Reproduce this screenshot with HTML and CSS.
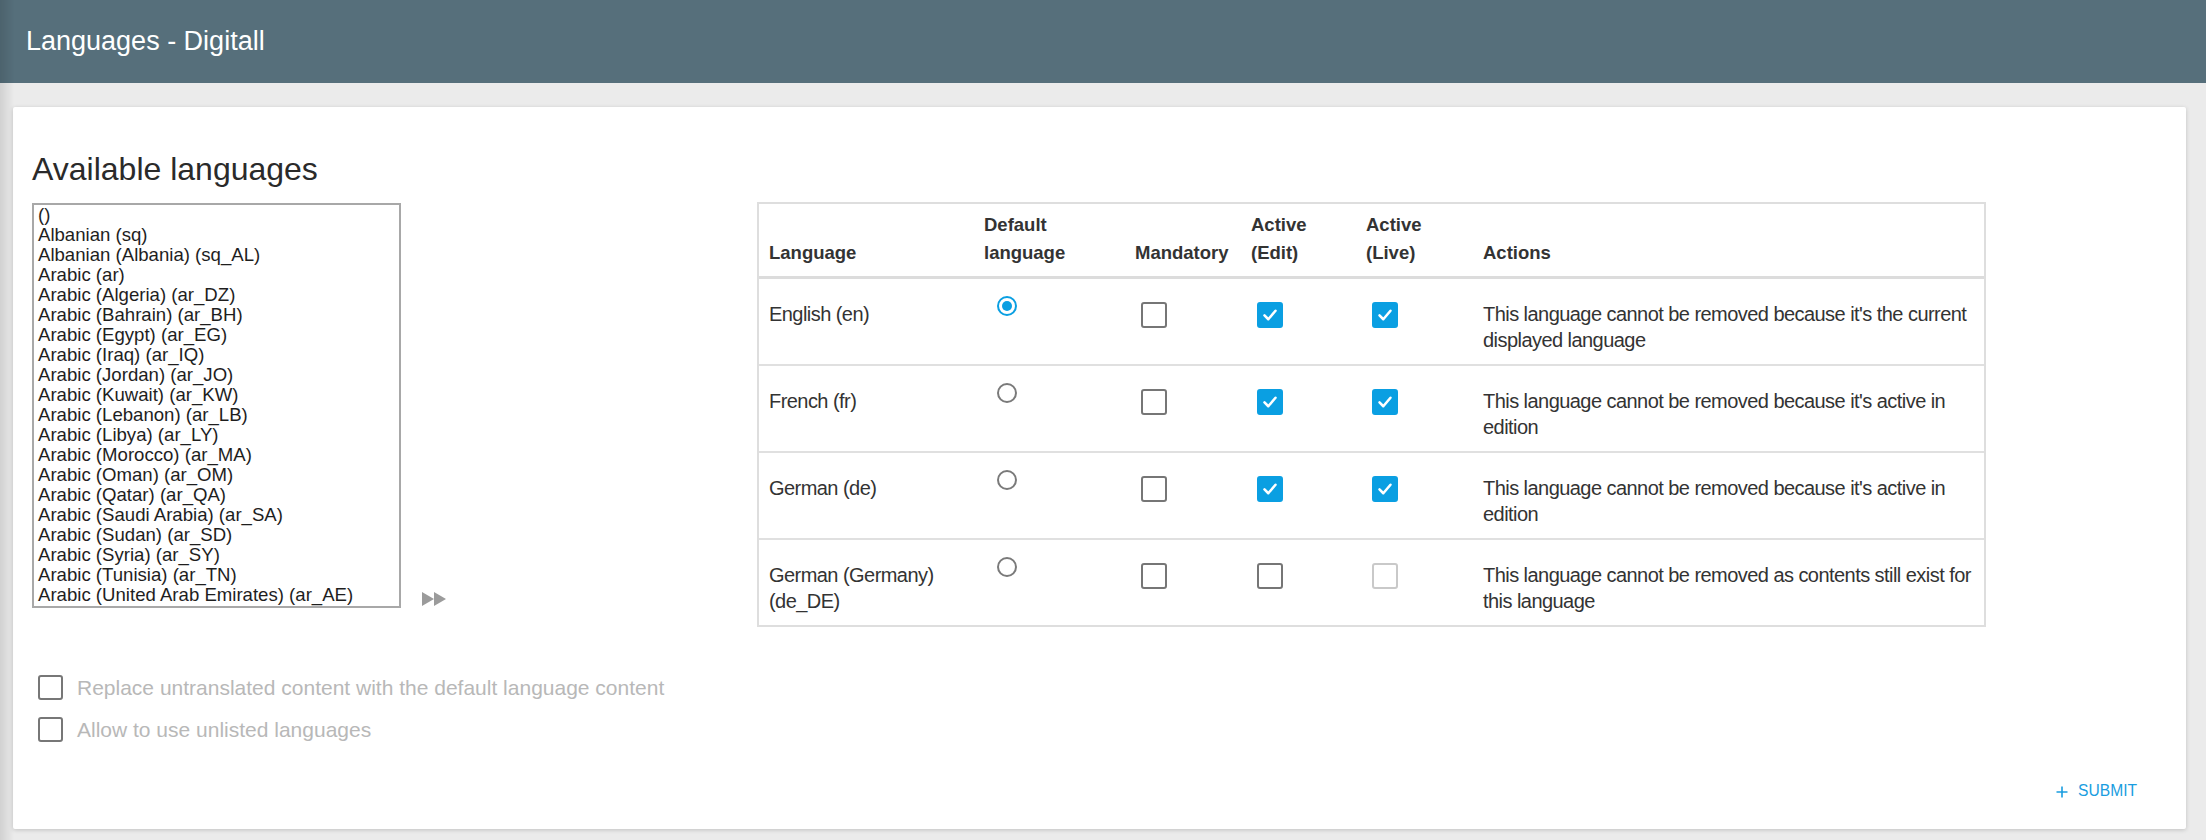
FILE: index.html
```html
<!DOCTYPE html>
<html lang="en">
<head>
<meta charset="utf-8">
<title>Languages - Digitall</title>
<link rel="stylesheet" href="styles.css">
</head>
<body>
<header class="topbar">Languages - Digitall</header>
<main class="card">
  <h1 class="title">Available languages</h1>
  <div class="lang-row">
    <div class="picker">
      <ul class="listbox">
        <li>()</li>
        <li>Albanian (sq)</li>
        <li>Albanian (Albania) (sq_AL)</li>
        <li>Arabic (ar)</li>
        <li>Arabic (Algeria) (ar_DZ)</li>
        <li>Arabic (Bahrain) (ar_BH)</li>
        <li>Arabic (Egypt) (ar_EG)</li>
        <li>Arabic (Iraq) (ar_IQ)</li>
        <li>Arabic (Jordan) (ar_JO)</li>
        <li>Arabic (Kuwait) (ar_KW)</li>
        <li>Arabic (Lebanon) (ar_LB)</li>
        <li>Arabic (Libya) (ar_LY)</li>
        <li>Arabic (Morocco) (ar_MA)</li>
        <li>Arabic (Oman) (ar_OM)</li>
        <li>Arabic (Qatar) (ar_QA)</li>
        <li>Arabic (Saudi Arabia) (ar_SA)</li>
        <li>Arabic (Sudan) (ar_SD)</li>
        <li>Arabic (Syria) (ar_SY)</li>
        <li>Arabic (Tunisia) (ar_TN)</li>
        <li>Arabic (United Arab Emirates) (ar_AE)</li>
        <li>Arabic (Yemen) (ar_YE)</li>
      </ul>
      <svg class="ff" width="24" height="14" viewBox="0 0 24 14"><polygon points="0,0 12,7 0,14"/><polygon points="12,0 24,7 12,14"/></svg>
    </div>
    <table class="langs">
      <colgroup>
        <col class="c-lang"><col class="c-def"><col class="c-man"><col class="c-edit"><col class="c-live"><col class="c-act">
      </colgroup>
      <thead>
        <tr>
          <th>Language</th>
          <th>Default<br>language</th>
          <th>Mandatory</th>
          <th>Active<br>(Edit)</th>
          <th>Active<br>(Live)</th>
          <th>Actions</th>
        </tr>
      </thead>
      <tbody>
        <tr>
          <td>English (en)</td>
          <td><span class="radio on"></span></td>
          <td><span class="cb"></span></td>
          <td><span class="cb on"><svg viewBox="0 0 26 26"><polyline points="6.5,13.5 11,18 19.5,8"/></svg></span></td>
          <td><span class="cb on"><svg viewBox="0 0 26 26"><polyline points="6.5,13.5 11,18 19.5,8"/></svg></span></td>
          <td>This language cannot be removed because it's the current<br>displayed language</td>
        </tr>
        <tr>
          <td>French (fr)</td>
          <td><span class="radio"></span></td>
          <td><span class="cb"></span></td>
          <td><span class="cb on"><svg viewBox="0 0 26 26"><polyline points="6.5,13.5 11,18 19.5,8"/></svg></span></td>
          <td><span class="cb on"><svg viewBox="0 0 26 26"><polyline points="6.5,13.5 11,18 19.5,8"/></svg></span></td>
          <td>This language cannot be removed because it's active in<br>edition</td>
        </tr>
        <tr>
          <td>German (de)</td>
          <td><span class="radio"></span></td>
          <td><span class="cb"></span></td>
          <td><span class="cb on"><svg viewBox="0 0 26 26"><polyline points="6.5,13.5 11,18 19.5,8"/></svg></span></td>
          <td><span class="cb on"><svg viewBox="0 0 26 26"><polyline points="6.5,13.5 11,18 19.5,8"/></svg></span></td>
          <td>This language cannot be removed because it's active in<br>edition</td>
        </tr>
        <tr>
          <td>German (Germany)<br>(de_DE)</td>
          <td><span class="radio"></span></td>
          <td><span class="cb"></span></td>
          <td><span class="cb"></span></td>
          <td><span class="cb disabled"></span></td>
          <td>This language cannot be removed as contents still exist for<br>this language</td>
        </tr>
      </tbody>
    </table>
  </div>
  <div class="options">
    <label class="opt"><span class="box"></span><span>Replace untranslated content with the default language content</span></label>
    <label class="opt"><span class="box"></span><span>Allow to use unlisted languages</span></label>
  </div>
  <div class="actions">
    <button class="submit" type="button"><svg width="12" height="12" viewBox="0 0 12 12"><path d="M6 0.5V11.5M0.5 6H11.5"/></svg>SUBMIT</button>
  </div>
</main>
</body>
</html>
```
FILE: styles.css
```css
html, body {
  margin: 0;
  padding: 0;
}
body {
  background: #ebebeb;
  font-family: "Liberation Sans", Arial, Helvetica, sans-serif;
  color: #333;
  width: 2206px;
  height: 840px;
  overflow: hidden;
}
body::before {
  content: "";
  position: fixed;
  left: 0;
  top: 0;
  width: 14px;
  height: 100%;
  background: linear-gradient(to right, rgba(0,0,0,0.11), rgba(0,0,0,0));
  pointer-events: none;
  z-index: 5;
}
.topbar {
  height: 83px;
  background: #566f7b;
  color: #fff;
  font-size: 27px;
  display: flex;
  align-items: center;
  padding-left: 26px;
  box-sizing: border-box;
}
.card {
  margin: 24px 20px 0 13px;
  height: 722px;
  box-sizing: border-box;
  background: #fff;
  border-radius: 2px;
  box-shadow: 0 1px 4px rgba(0,0,0,0.18);
  padding: 44px 49px 28px 19px;
  display: flex;
  flex-direction: column;
}
.title {
  margin: 0;
  font-size: 32px;
  font-weight: 400;
  line-height: 37px;
  color: #2a2a2a;
}
.lang-row {
  display: flex;
  align-items: flex-start;
  margin-top: 14px;
}
.picker {
  width: 725px;
  flex: none;
  display: flex;
  align-items: flex-end;
  margin-top: 1px;
}
.listbox {
  list-style: none;
  margin: 0;
  padding: 0 4px;
  width: 369px;
  height: 405px;
  box-sizing: border-box;
  border: 2px solid #a8a8a8;
  overflow: hidden;
  font-size: 18.6px;
  line-height: 20px;
  color: #1e1e1e;
  white-space: nowrap;
}
.ff {
  margin-left: 21px;
  margin-bottom: 2px;
  fill: #9b9b9b;
}
.langs {
  width: 1227px;
  border-collapse: separate;
  border-spacing: 0;
  border: 2px solid #dedede;
  table-layout: fixed;
  font-size: 20px;
  letter-spacing: -0.55px;
}
.c-lang { width: 215px; }
.c-def { width: 151px; }
.c-man { width: 116px; }
.c-edit { width: 115px; }
.c-live { width: 117px; }
.c-act { width: 511px; }
.langs th {
  text-align: left;
  vertical-align: bottom;
  font-size: 18.5px;
  letter-spacing: 0;
  font-weight: 700;
  line-height: 28px;
  padding: 7px 6px 9px 10px;
  border-bottom: 3px solid #dcdcdc;
  color: #333;
  white-space: nowrap;
}
.langs td {
  vertical-align: top;
  line-height: 26px;
  padding: 22px 6px 11px 10px;
  border-bottom: 2px solid #e0e0e0;
  color: #333;
  white-space: nowrap;
}
.langs tbody tr:last-child td {
  border-bottom: 0;
}
.radio {
  display: block;
  width: 20px;
  height: 20px;
  box-sizing: border-box;
  border: 2px solid #7a7a7a;
  border-radius: 50%;
  margin: -5px 0 0 13px;
  position: relative;
}
.radio.on {
  border-color: #0a9fe2;
}
.radio.on::after {
  content: "";
  position: absolute;
  left: 3px;
  top: 3px;
  width: 10px;
  height: 10px;
  border-radius: 50%;
  background: #0a9fe2;
}
.cb {
  display: block;
  width: 26px;
  height: 26px;
  box-sizing: border-box;
  border: 2px solid #767676;
  border-radius: 3px;
  margin: 1px 0 0 6px;
  background: #fff;
}
.cb.on {
  background: #0a9fe2;
  border-color: #0a9fe2;
}
.cb.disabled {
  border-color: #c9c9c9;
}
.cb svg {
  display: block;
  width: 22px;
  height: 22px;
  fill: none;
  stroke: #fff;
  stroke-width: 3;
  stroke-linecap: round;
  stroke-linejoin: round;
}
.options {
  margin-top: 48px;
  display: flex;
  flex-direction: column;
  gap: 17px;
}
.opt {
  display: flex;
  align-items: center;
  gap: 14px;
  font-size: 21px;
  color: #b8b8b8;
  margin-left: 6px;
}
.box {
  width: 25px;
  height: 25px;
  box-sizing: border-box;
  border: 2px solid #777;
  border-radius: 3px;
  flex: none;
}
.actions {
  margin-top: auto;
  display: flex;
  justify-content: flex-end;
}
.submit {
  border: 0;
  background: none;
  padding: 0;
  font-family: "Liberation Sans", Arial, Helvetica, sans-serif;
  font-size: 15.6px;
  line-height: 20px;
  color: #1a9de0;
  display: flex;
  align-items: center;
  gap: 10px;
}
.submit svg {
  fill: none;
  stroke: #1a9de0;
  stroke-width: 1.6;
  margin-top: 2px;
}
```
